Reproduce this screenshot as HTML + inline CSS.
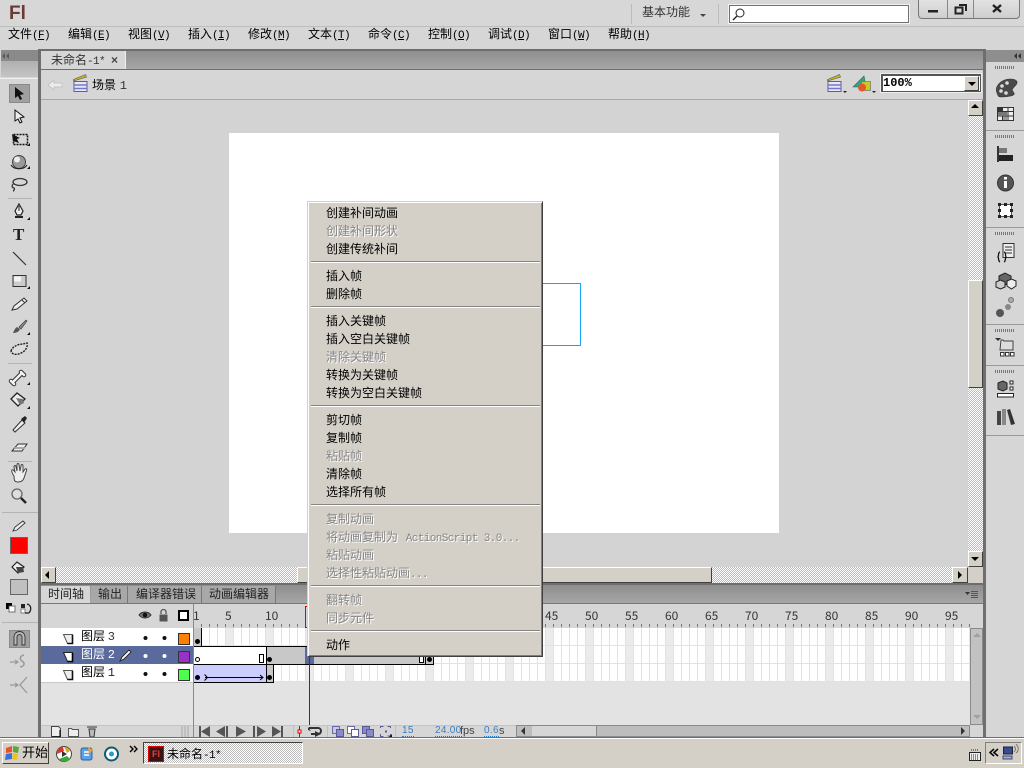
<!DOCTYPE html>
<html><head><meta charset="utf-8"><title>Flash</title>
<style>
html,body{margin:0;padding:0;width:1024px;height:768px;overflow:hidden;background:#d6d6d6}
body{position:relative;font:12px/16px "WenQuanYi Zen Hei","Noto Sans CJK SC",sans-serif;color:#000}
div,span.a{position:absolute}
.t{position:absolute;white-space:nowrap;line-height:16px;height:16px}
.m{font-family:"Liberation Mono",monospace;font-size:11px;letter-spacing:-.6px}
.d{color:#858585;text-shadow:1px 1px 0 #fff}
.s{left:3px;width:229px;height:1px;margin-top:-1px;background:#848484;border-bottom:1px solid #fff}
.ck{background-color:#fff;background-image:linear-gradient(45deg,#bdbdbd 25%,transparent 25%,transparent 75%,#bdbdbd 75%),linear-gradient(45deg,#bdbdbd 25%,transparent 25%,transparent 75%,#bdbdbd 75%);background-size:2px 2px;background-position:0 0,1px 1px}
.b{background:#d4d0c8;border:1px solid;border-color:#fff #404040 #404040 #fff;box-sizing:border-box}
.h{height:1px;background:#b4b4b4;left:5px;width:28px}
.rl{font-size:12px;color:#333}
.v{position:absolute;white-space:nowrap;top:724px;color:#3a7ec0;font:10px/14px 'Liberation Sans',sans-serif;letter-spacing:.3px;border-bottom:1px dotted #2a7ac0;height:12px}
.u{position:absolute;white-space:nowrap;top:724px;color:#444;font:11px/14px 'Liberation Sans',sans-serif}
</style></head><body>

<!-- top bar -->
<div style="left:0;top:0;width:1024px;height:26px;background:#d7d7d7"></div>
<div style="left:0;top:26px;width:1024px;height:1px;background:#bdbdbd"></div>
<div class="t" style="left:9px;top:2px;font:bold 19px/24px 'Liberation Sans',sans-serif;color:#6b3a36;height:24px">Fl</div>
<div style="left:631px;top:4px;width:1px;height:20px;background:#bcbcbc"></div>
<div style="left:718px;top:4px;width:1px;height:20px;background:#bcbcbc"></div>
<div class="t" style="left:642px;top:4px;color:#333">基本功能</div>
<div style="left:700px;top:14px;width:0;height:0;border:3px solid transparent;border-top:3px solid #444"></div>
<div style="left:729px;top:5px;width:180px;height:18px;background:#fff;border:1px solid #707070;box-sizing:border-box;outline:1px solid #f2f2f2"></div>
<svg style="position:absolute;left:731px;top:6px" width="16" height="16"><circle cx="9" cy="7" r="4" fill="none" stroke="#222"/><path d="M6 10L2 14" stroke="#222" stroke-width="1.3"/></svg>
<div style="left:918px;top:-3px;width:102px;height:22px;background:linear-gradient(#e4e4e4,#cecece);border:1px solid #777;border-radius:0 0 4px 4px;box-sizing:border-box"></div>
<div style="left:947px;top:0;width:1px;height:18px;background:#888"></div>
<div style="left:973px;top:0;width:1px;height:18px;background:#888"></div>
<svg style="position:absolute;left:918px;top:0" width="102" height="18"><path d="M10 10h10v2.500h-10z" fill="#222"/><path d="M37.500 7.500h7v6h-7zM41 5h7v6" fill="none" stroke="#222" stroke-width="2"/><path d="M75 5l8 7M83 5l-8 7" fill="none" stroke="#222" stroke-width="2.400"/></svg>

<!-- menu bar -->
<div class="t" style="left:8px;top:26px">文件<span class="m">(<u>F</u>)</span></div>
<div class="t" style="left:68px;top:26px">编辑<span class="m">(<u>E</u>)</span></div>
<div class="t" style="left:128px;top:26px">视图<span class="m">(<u>V</u>)</span></div>
<div class="t" style="left:188px;top:26px">插入<span class="m">(<u>I</u>)</span></div>
<div class="t" style="left:248px;top:26px">修改<span class="m">(<u>M</u>)</span></div>
<div class="t" style="left:308px;top:26px">文本<span class="m">(<u>T</u>)</span></div>
<div class="t" style="left:368px;top:26px">命令<span class="m">(<u>C</u>)</span></div>
<div class="t" style="left:428px;top:26px">控制<span class="m">(<u>O</u>)</span></div>
<div class="t" style="left:488px;top:26px">调试<span class="m">(<u>D</u>)</span></div>
<div class="t" style="left:548px;top:26px">窗口<span class="m">(<u>W</u>)</span></div>
<div class="t" style="left:608px;top:26px">帮助<span class="m">(<u>H</u>)</span></div>

<!-- left tools panel -->
<div style="left:0;top:50px;width:38px;height:688px;background:#d6d6d6"></div>
<div style="left:1px;top:50px;width:37px;height:11px;background:#8a8a8a"></div>
<div style="left:1px;top:61px;width:37px;height:16px;background:linear-gradient(#b0b0b0,#c4c4c4)"></div>
<div style="left:0;top:78px;width:38px;height:1px;background:#f0f0f0"></div>
<div style="left:38px;top:49px;width:3px;height:689px;background:#6e6e6e"></div>
<div style="left:9px;top:84px;width:21px;height:19px;background:#a0a0a0;border:1px solid #8a8a8a;box-sizing:border-box"></div>
<div style="left:9px;top:630px;width:21px;height:18px;background:#a0a0a0;border:1px solid #8a8a8a;box-sizing:border-box"></div>
<div class="h" style="top:198px;left:8px;width:24px"></div>
<div class="h" style="top:363px;left:8px;width:24px"></div>
<div class="h" style="top:461px;left:8px;width:24px"></div>
<div class="h" style="top:512px;left:2px;width:36px"></div>
<div class="h" style="top:622px;left:2px;width:36px"></div>
<div style="left:10px;top:537px;width:18px;height:17px;background:#f00;border:1px solid #666;box-sizing:border-box"></div>
<div style="left:10px;top:579px;width:18px;height:16px;background:#c0c0c0;border:1px solid #666;box-sizing:border-box"></div>

<svg style="position:absolute;left:0;top:50px" width="38" height="660" viewBox="0 50 38 660">
<path d="M5 53v6l-3-3zM9 53v6l-3-3z" fill="#5a5a5a"/>
<path d="M15 87l0 11 3-2 2 4 2-1-2-4 4-1z" fill="#111"/>
<path d="M15 110l0 11 3-2 2 4 2-1-2-4 4-1z" fill="#eee" stroke="#111"/>
<rect x="13.500" y="134.500" width="14" height="10" fill="none" stroke="#111" stroke-dasharray="2 1" stroke-width="1.500"/><path d="M12 134l8 4-3 1 2 4-6-2z" fill="#111"/><path d="M30 143v3h-3z" fill="#111"/>
<circle cx="19" cy="162" r="6.500" fill="#999" stroke="#444"/><circle cx="17" cy="159.500" r="3" fill="#eee"/><path d="M11 165c3 5 13 5 16 0" fill="none" stroke="#222" stroke-width="1.200"/><path d="M30 166v3h-3z" fill="#111"/>
<ellipse cx="20" cy="182" rx="7" ry="3.500" fill="none" stroke="#333" stroke-width="1.300"/><path d="M13 184c-2 3 0 4 1 4s0 3-1 3" fill="none" stroke="#333" stroke-width="1.300"/>
<path d="M19 204l4 7-2 4h-4l-2-4z" fill="#eee" stroke="#222" stroke-width="1.200"/><path d="M19 206v5" stroke="#222"/><rect x="15" y="216" width="8" height="2" fill="#222"/><path d="M30 217v3h-3z" fill="#111"/>
<path d="M13 252l13 13" stroke="#333" stroke-width="1.200"/>
<rect x="13" y="275.500" width="13" height="11" fill="#ccc" stroke="#333"/><rect x="14" y="276.500" width="7" height="5" fill="#f4f4f4"/><path d="M30 286v3h-3z" fill="#111"/>
<path d="M12 310l2-4 10-8 3 3-10 8z" fill="#eee" stroke="#333"/><path d="M22 300l3 3" stroke="#333"/>
<path d="M13 333c3 0 6-1 7-4l-3-2c-2 1-3 4-4 6z" fill="#555"/><path d="M19 327l7-7 1 1-6 8z" fill="#888" stroke="#333" stroke-width=".6"/><path d="M30 332v3h-3z" fill="#111"/>
<path d="M11 351c2-6 10-7 12-7l4-1c1 3-1 8-6 10-4 2-9 2-10-2z" fill="#ddd" stroke="#222" stroke-dasharray="2 1" stroke-width="1.400"/>
<path d="M13 382l9-9M11 381l3 3M21 372l3 3" stroke="#333" stroke-width="4.500" stroke-linecap="round"/><path d="M13 382l9-9M11 381l3 3M21 372l3 3" stroke="#f2f2f2" stroke-width="2.500" stroke-linecap="round"/><path d="M30 382v3h-3z" fill="#111"/>
<path d="M11 399l6-6 8 6-7 7z" fill="#eee" stroke="#222" stroke-width="1.300"/><path d="M16 398l7 1 1 4-4 2z" fill="#777"/><path d="M30 406v3h-3z" fill="#111"/>
<path d="M13 430l9-10 3 3-10 9z" fill="#eee" stroke="#333"/><path d="M21 419l4-3 2 2-3 5z" fill="#222"/>
<path d="M12 451l6-7h9l-5 7z" fill="#eee" stroke="#333"/><path d="M15 447h10l-1 2h-10z" fill="#aaa"/>
<path d="M14 476c-2-3-3-5-2-6s2 1 3 2l-1-5c0-2 2-2 2 0l1 4 0-6c0-2 2-2 2 0l1 6 1-5c0-2 2-2 2 0l0 6 2-3c2-1 2 1 1 3l-2 6c-1 3-3 4-6 4s-4-1-4-6z" fill="#eee" stroke="#444"/>
<circle cx="17" cy="494" r="5" fill="#ddd" stroke="#666" stroke-width="1.300"/><path d="M21 498l5 5" stroke="#222" stroke-width="2.400"/>
<path d="M13 531l2-4 8-6 2 2-8 7z" fill="#eee" stroke="#333" stroke-width=".9"/>
<path d="M12 567l5-5 7 5-6 6z" fill="#eee" stroke="#222" stroke-width="1.200"/><path d="M16 567h7l1 5-6 1z" fill="#444"/>
<rect x="6" y="603" width="6" height="6" fill="#000"/><rect x="9" y="606" width="6" height="6" fill="#fff" stroke="#555" stroke-width=".8"/>
<rect x="21" y="604" width="4" height="4" fill="#222"/><rect x="21" y="609" width="4" height="4" fill="#fff" stroke="#555" stroke-width=".7"/><path d="M27 604c4 1 5 5 2 9M25 613h4" fill="none" stroke="#222" stroke-width="1.300"/>
<path d="M14 645v-8a5.500 5.500 0 0 1 11 0v8h-3v-8a2.500 2.500 0 0 0-5 0v8z" fill="#bbb" stroke="#333" stroke-width=".9"/>
<path d="M10 662h8M15 660l3 2-3 2" stroke="#999" fill="none" stroke-width="1.200"/><path d="M24 655c-4 1-5 4-2 6s3 5-2 6" fill="none" stroke="#999" stroke-width="1.500"/>
<path d="M10 685h8M15 683l3 2-3 2" stroke="#999" fill="none" stroke-width="1.200"/><path d="M27 677l-7 8 7 8" fill="none" stroke="#999" stroke-width="1.300"/>
</svg>
<div class="t" style="left:13px;top:225px;font:bold 17px/20px 'Liberation Serif',serif;height:20px;color:#222">T</div>

<!-- doc tabs -->
<div style="left:38px;top:49px;width:947px;height:2px;background:#6e6e6e"></div>
<div style="left:41px;top:51px;width:942px;height:18px;background:linear-gradient(#8e8e8e,#a6a6a6)"></div>
<div style="left:41px;top:51px;width:84px;height:18px;background:#d6d6d6;border-right:1px solid #f0f0f0"></div>
<div class="t" style="left:51px;top:52px;color:#333">未命名<span class="m">-1*</span></div>
<div class="t" style="left:111px;top:52px;color:#444;font-size:12px;font-family:'Liberation Sans',sans-serif"><b>×</b></div>
<div style="left:41px;top:69px;width:942px;height:1px;background:#6e6e6e"></div>
<div style="left:41px;top:70px;width:942px;height:29px;background:#d6d6d6"></div>
<div style="left:41px;top:99px;width:942px;height:1px;background:#a8a8a8"></div>
<svg style="position:absolute;left:41px;top:70px" width="942" height="29">
<path d="M7 15l6-5v3h8v4h-8v3z" fill="#ececec" stroke="#c4c4c4"/>
<rect x="33" y="11.500" width="13" height="10" fill="#e8e8fb" stroke="#5b5ba8"/><path d="M33 15h13M33 18.500h13" stroke="#7777c4" stroke-width="1.500"/><path d="M32.500 9.500l12-5 1 2.500-13 4z" fill="#c8b820" stroke="#555" stroke-width=".6"/>
<g transform="translate(754 0)"><rect x="33" y="11.500" width="13" height="10" fill="#e8e8fb" stroke="#5b5ba8"/><path d="M33 15h13M33 18.500h13" stroke="#7777c4" stroke-width="1.500"/><path d="M32.500 9.500l12-5 1 2.500-13 4z" fill="#c8b820" stroke="#555" stroke-width=".6"/></g>
<path d="M802 21h4l-2 2z" fill="#222"/>
<path d="M812 17l11-11 2 11z" fill="#2fa58f" stroke="#1b6a60" stroke-width=".6"/><rect x="820.500" y="11.500" width="9" height="9" fill="#c9c91f" stroke="#666" stroke-width=".6"/><circle cx="821" cy="17.500" r="4" fill="#dd5a2a"/>
<path d="M831 21h4l-2 2z" fill="#222"/>
</svg>
<div class="t" style="left:92px;top:77px">场景 <span style="font-family:'Liberation Mono',monospace;font-size:12px;color:#333;margin-left:1px">1</span></div>
<div style="left:881px;top:74px;width:100px;height:18px;background:#fff;border:1px solid #555;border-width:2px 1px 1px 2px;box-sizing:border-box;outline:1px solid #eee"></div>
<div class="t" style="left:883px;top:75px;font:bold 12px/16px 'Liberation Mono',monospace">100%</div>
<div class="b" style="left:964px;top:76px;width:15px;height:15px"></div>
<div style="left:968px;top:82px;width:0;height:0;border:4px solid transparent;border-top:4px solid #000"></div>

<!-- stage -->
<div style="left:41px;top:100px;width:927px;height:467px;background:#d3d3d3"></div>
<div style="left:229px;top:133px;width:550px;height:400px;background:#fff"></div>
<div style="left:500px;top:283px;width:81px;height:63px;border:1px solid #12a7f5;box-sizing:border-box"></div>

<!-- stage v scrollbar -->
<div class="ck" style="left:968px;top:100px;width:15px;height:467px"></div>
<div class="b" style="left:968px;top:280px;width:15px;height:108px"></div>
<div class="b" style="left:968px;top:100px;width:15px;height:16px"></div>
<div style="left:971px;top:104px;width:0;height:0;border:4px solid transparent;border-bottom:4px solid #000;border-top:0"></div>
<div class="b" style="left:968px;top:551px;width:15px;height:16px"></div>
<div style="left:971px;top:557px;width:0;height:0;border:4px solid transparent;border-top:4px solid #000;border-bottom:0"></div>
<!-- stage h scrollbar -->
<div class="ck" style="left:41px;top:567px;width:927px;height:16px"></div>
<div class="b" style="left:297px;top:567px;width:415px;height:16px"></div>
<div class="b" style="left:41px;top:567px;width:15px;height:16px"></div>
<div style="left:45px;top:571px;width:0;height:0;border:4px solid transparent;border-right:4px solid #000;border-left:0"></div>
<div class="b" style="left:952px;top:567px;width:16px;height:16px"></div>
<div style="left:958px;top:571px;width:0;height:0;border:4px solid transparent;border-left:4px solid #000;border-right:0"></div>
<div style="left:968px;top:567px;width:15px;height:16px;background:#d4d0c8"></div>

<!-- timeline -->
<div style="left:41px;top:583px;width:942px;height:2px;background:#6e6e6e"></div>
<div style="left:41px;top:585px;width:942px;height:18px;background:linear-gradient(#8e8e8e,#a6a6a6)"></div>
<div style="left:41px;top:586px;width:49px;height:18px;background:#d6d6d6"></div>
<div style="left:91px;top:586px;width:36px;height:17px;background:#a8a8a8;border-right:1px solid #777"></div>
<div style="left:128px;top:586px;width:73px;height:17px;background:#a8a8a8;border-right:1px solid #777"></div>
<div style="left:202px;top:586px;width:73px;height:17px;background:#a8a8a8;border-right:1px solid #777"></div>
<div class="t" style="left:48px;top:586px;color:#222">时间轴</div>
<div class="t" style="left:98px;top:586px;color:#222">输出</div>
<div class="t" style="left:136px;top:586px;color:#222">编译器错误</div>
<div class="t" style="left:209px;top:586px;color:#222">动画编辑器</div>
<svg style="position:absolute;left:964px;top:589px" width="16" height="12"><path d="M1 3h5l-2.500 3z" fill="#333"/><path d="M7 2.500h7M7 4.500h7M7 6.500h7M7 8.500h7" stroke="#555"/></svg>
<div style="left:41px;top:603px;width:942px;height:1px;background:#777"></div>
<div style="left:41px;top:604px;width:942px;height:24px;background:#d6d6d6"></div>
<svg style="position:absolute;left:130px;top:606px" width="64" height="20">
<path d="M9 9c3-4 9-4 12 0-3 4-9 4-12 0z" fill="#777" stroke="#333"/><circle cx="15" cy="9" r="2.300" fill="#111"/>
<rect x="29.500" y="8.500" width="8" height="7" fill="#555"/><path d="M31 8V6a2.500 2.500 0 0 1 5 0v2" fill="none" stroke="#555" stroke-width="1.300"/>
<rect x="49" y="5" width="9" height="9" fill="#fff" stroke="#000" stroke-width="2"/>
</svg>
<div class="t rl" style="left:193px;top:608px">1</div>
<div class="t rl" style="left:225px;top:608px">5</div>
<div class="t rl" style="left:265px;top:608px">10</div>
<div style="left:194px;top:624px;width:776px;height:3px;background:repeating-linear-gradient(90deg,transparent 0,transparent 7px,#777 7px,#777 8px)"></div>
<div class="t rl" style="left:545px;top:608px">45</div><div class="t rl" style="left:585px;top:608px">50</div><div class="t rl" style="left:625px;top:608px">55</div><div class="t rl" style="left:665px;top:608px">60</div><div class="t rl" style="left:705px;top:608px">65</div><div class="t rl" style="left:745px;top:608px">70</div><div class="t rl" style="left:785px;top:608px">75</div><div class="t rl" style="left:825px;top:608px">80</div><div class="t rl" style="left:865px;top:608px">85</div><div class="t rl" style="left:905px;top:608px">90</div><div class="t rl" style="left:945px;top:608px">95</div>

<!-- layer names -->
<div style="left:41px;top:628px;width:153px;height:18px;background:#fff"></div>
<div style="left:41px;top:646px;width:153px;height:18px;background:#5a6a9c"></div>
<div style="left:41px;top:664px;width:153px;height:18px;background:#fff"></div>
<div style="left:41px;top:682px;width:929px;height:43px;background:#e3e3e3"></div>
<div style="left:41px;top:682px;width:153px;height:1px;background:#c8c8c8"></div>
<div style="left:193px;top:604px;width:1px;height:134px;background:#8a8a8a"></div>
<!-- grid -->
<div style="left:194px;top:628px;width:776px;height:54px;background:repeating-linear-gradient(90deg,#fff 0,#fff 7px,#e2e2e2 7px,#e2e2e2 8px)"></div>
<div style="left:226px;top:628px;width:744px;height:54px;background:repeating-linear-gradient(90deg,#ebebeb 0,#ebebeb 7px,#e2e2e2 7px,#e2e2e2 8px,transparent 8px,transparent 40px)"></div>
<div style="left:194px;top:645px;width:776px;height:1px;background:#e2e2e2"></div>
<div style="left:194px;top:663px;width:776px;height:1px;background:#e2e2e2"></div>
<div style="left:194px;top:681px;width:776px;height:1px;background:#e2e2e2"></div>

<div class="t" style="left:81px;top:628px">图层 <span style="font:12px 'Liberation Mono',monospace;color:#333">3</span></div>
<div class="t" style="left:81px;top:646px;color:#fff">图层 <span style="font:12px 'Liberation Mono',monospace">2</span></div>
<div class="t" style="left:81px;top:664px">图层 <span style="font:12px 'Liberation Mono',monospace;color:#225">1</span></div>

<svg style="position:absolute;left:41px;top:628px" width="153" height="54">
<path d="M22.500 6.500h9v9h-5z" fill="#eee" stroke="#555"/><path d="M31.500 7v8.500h-5" fill="none" stroke="#111" stroke-width="1.600"/>
<g transform="translate(0 18)"><path d="M22.500 6.500h9v9h-5z" fill="#fff" stroke="#222"/><path d="M31.500 7v8.500h-5" fill="none" stroke="#000" stroke-width="1.600"/></g>
<g transform="translate(0 36)"><path d="M22.500 6.500h9v9h-5z" fill="#eee" stroke="#555"/><path d="M31.500 7v8.500h-5" fill="none" stroke="#111" stroke-width="1.600"/></g>
<circle cx="104.500" cy="10" r="2" fill="#111"/><circle cx="123.500" cy="10" r="2" fill="#111"/>
<circle cx="104.500" cy="28" r="2" fill="#fff"/><circle cx="123.500" cy="28" r="2" fill="#fff"/>
<circle cx="104.500" cy="46" r="2" fill="#111"/><circle cx="123.500" cy="46" r="2" fill="#111"/>
<rect x="137.500" y="5.500" width="11" height="11" fill="#ff8000" stroke="#333"/>
<rect x="137.500" y="23.500" width="11" height="11" fill="#9930c8" stroke="#333"/>
<rect x="137.500" y="41.500" width="11" height="11" fill="#4cff4c" stroke="#333"/>
<path d="M79 33l2-4 7-7 2 2-7 7z" fill="#fff" stroke="#222" stroke-width=".9"/>
</svg>

<!-- frames -->
<div style="left:194px;top:628px;width:8px;height:18px;background:#c8c8c8;border-right:1px solid #000;box-sizing:border-box"></div>
<div style="left:194px;top:646px;width:72px;height:19px;background:#fff;border:1px solid #000;border-width:1px 0;box-sizing:border-box"></div>
<div style="left:266px;top:646px;width:168px;height:19px;background:#c8c8c8;border:1px solid #000;box-sizing:border-box"></div>
<div style="left:194px;top:664px;width:72px;height:19px;background:#ccccff;border:1px solid #000;border-width:1px 0;box-sizing:border-box"></div>
<div style="left:266px;top:664px;width:8px;height:19px;background:#c8c8c8;border:1px solid #000;box-sizing:border-box"></div>
<div style="left:305px;top:647px;width:9px;height:17px;background:#5a6a9c"></div>
<svg style="position:absolute;left:194px;top:628px" width="240" height="56">
<circle cx="3.500" cy="13.500" r="2.500" fill="#000"/>
<circle cx="3.500" cy="31.500" r="2" fill="#fff" stroke="#000"/>
<rect x="65.500" y="26.500" width="4" height="8" fill="#fff" stroke="#000"/>
<circle cx="75.500" cy="31.500" r="2.500" fill="#000"/>
<rect x="225.500" y="26.500" width="4" height="8" fill="#fff" stroke="#000"/>
<line x1="231.500" y1="26" x2="231.500" y2="36" stroke="#000"/>
<circle cx="235.500" cy="31.500" r="2.500" fill="#000"/>
<circle cx="3.500" cy="49.500" r="2.500" fill="#000"/>
<path d="M10.500 46.500l3 3-3 3M11 49.500h58M66 47l3 2.500-3 2.500" fill="none" stroke="#000"/>
<circle cx="75.500" cy="49.500" r="2.500" fill="#000"/>
</svg>
<!-- playhead -->
<div style="left:305px;top:606px;width:9px;height:22px;border:1px solid #e00000;box-sizing:border-box"></div>
<div style="left:309px;top:628px;width:1px;height:97px;background:#c00000"></div>

<!-- timeline scroll -->
<div style="left:970px;top:628px;width:13px;height:97px;background:#c2c2c2;border:1px solid #8a8a8a;box-sizing:border-box"></div>
<div style="left:973px;top:633px;width:0;height:0;border:4px solid transparent;border-bottom:4px solid #a0a0a0;border-top:0"></div>
<div style="left:973px;top:715px;width:0;height:0;border:4px solid transparent;border-top:4px solid #a0a0a0;border-bottom:0"></div>
<div style="left:41px;top:725px;width:942px;height:12px;background:#d6d6d6;border-top:1px solid #c4c4c4;box-sizing:border-box"></div>
<div style="left:193px;top:725px;width:1px;height:13px;background:#8a8a8a"></div>
<svg style="position:absolute;left:41px;top:725px" width="480" height="13">
<path d="M10.500 1.500h7l2 2v8h-9z" fill="#eee" stroke="#444"/><path d="M19 5v7h-8" fill="none" stroke="#111" stroke-width="1.200"/>
<path d="M27.500 3.500h3l1 1h6v7h-10z" fill="#eee" stroke="#555"/>
<path d="M46 2h10M48 4h6l-1 8h-4z" fill="#bbb" stroke="#333"/>
<path d="M141 1v11M144 1v11M147 1v11" stroke="#999" stroke-width=".8"/>
<g fill="#555"><path d="M158 1h2v11h-2zM169 1l-9 5.500 9 5.500z"/><path d="M175 6.500l9-5.500v11zM185 1h2v11h-2z"/><path d="M195 1l10 5.500-10 5.500z"/><path d="M212 1h2v11h-2zM216 1l9 5.500-9 5.500z"/><path d="M231 1l9 5.500-9 5.500zM240 1h2v11h-2z"/></g>
<line x1="252.500" y1="0" x2="252.500" y2="13" stroke="#c0c0c0"/>
<path d="M258.500 1v11" stroke="#e00000"/><rect x="257" y="5" width="3" height="3" fill="#fff" stroke="#e00000"/>
<path d="M268 3h9a2 2 0 0 1 0 6h-7" fill="none" stroke="#333" stroke-width="2"/><path d="M274 6l6 3-6 3zM270 6l-3-1v-3" fill="#333"/>
<line x1="286.500" y1="0" x2="286.500" y2="13" stroke="#c0c0c0"/>
<rect x="291.500" y="1.500" width="7" height="7" fill="#c8c8e8" stroke="#6a6aa8"/><rect x="295.500" y="4.500" width="7" height="7" fill="#8a8ac8" stroke="#5a5a98"/>
<rect x="306.500" y="1.500" width="7" height="7" fill="#fff" stroke="#6a6aa8"/><rect x="310.500" y="4.500" width="7" height="7" fill="#fff" stroke="#5a5a98"/>
<rect x="321.500" y="1.500" width="7" height="7" fill="#8a8ac8" stroke="#5a5a98"/><rect x="325.500" y="4.500" width="7" height="7" fill="#8a8ac8" stroke="#5a5a98"/>
<path d="M339.500 3V1.500h3M346.500 1.500h3V3M349.500 9v2h-3M342.500 11.500h-3V9" fill="none" stroke="#5a5a98"/><rect x="344" y="5.500" width="2" height="2" fill="#5a5a98"/><path d="M351 9v3h-3z" fill="#111"/>
<line x1="354.500" y1="0" x2="354.500" y2="13" stroke="#c0c0c0"/>
</svg>
<div class="v" style="left:402px">15</div>
<div class="v" style="left:435px">24.00</div>
<div class="u" style="left:460px">fps</div>
<div class="v" style="left:484px">0.6</div>
<div class="u" style="left:499px">s</div>
<div style="left:516px;top:725px;width:454px;height:12px;background:#bdbdbd;border:1px solid #8a8a8a;box-sizing:border-box"></div>
<div style="left:532px;top:726px;width:64px;height:10px;background:#d6d6d6;border-right:1px solid #888"></div>
<div style="left:521px;top:727px;width:0;height:0;border:4px solid transparent;border-right:4px solid #333;border-left:0"></div>
<div style="left:961px;top:727px;width:0;height:0;border:4px solid transparent;border-left:4px solid #333;border-right:0"></div>
<div style="left:970px;top:725px;width:13px;height:12px;background:#d6d6d6"></div>
<div style="left:0;top:737px;width:1024px;height:1px;background:#6e6e6e"></div>

<!-- right panel -->
<div style="left:983px;top:49px;width:3px;height:689px;background:#6e6e6e"></div>
<div style="left:986px;top:50px;width:38px;height:12px;background:#8e8e8e"></div>
<div style="left:986px;top:62px;width:38px;height:675px;background:#d6d6d6"></div>
<div style="left:986px;top:130px;width:38px;height:1px;background:#9a9a9a"></div>
<div style="left:986px;top:227px;width:38px;height:1px;background:#9a9a9a"></div>
<div style="left:986px;top:324px;width:38px;height:1px;background:#9a9a9a"></div>
<div style="left:986px;top:365px;width:38px;height:1px;background:#9a9a9a"></div>
<div style="left:986px;top:435px;width:38px;height:1px;background:#9a9a9a"></div>
<svg style="position:absolute;left:986px;top:50px" width="38" height="390" viewBox="986 50 38 390">
<path d="M1017 53v6l-3-3zM1021 53v6l-3-3z" fill="#333"/>
<g stroke="#777" stroke-dasharray="1 1" stroke-width="3"><path d="M995 67.500h20M995 136.500h20M995 233.500h20M995 330.500h20M995 371.500h20"/></g>
<path d="M997 93c-3-7 5-14 13-14 7 0 9 3 5 7s-3 4-1 7-8 4-12 4-4-1-5-4z" fill="#4a4a4a" stroke="#333" stroke-width=".6"/><circle cx="1002" cy="86" r="1.800" fill="#ddd"/><circle cx="1007" cy="83" r="1.800" fill="#ddd"/><circle cx="1001" cy="91" r="1.800" fill="#ddd"/><circle cx="1006" cy="93" r="1.800" fill="#ddd"/>
<rect x="997.500" y="107.500" width="16" height="13" fill="#eee" stroke="#333"/><path d="M997 111.500h16M997 116h16M1002.500 107v13M1008 107v13" stroke="#333"/><rect x="998" y="108" width="4" height="3" fill="#333"/><rect x="998" y="112" width="9" height="4" fill="#777"/><rect x="1003" y="116.500" width="5" height="3.500" fill="#999"/>
<rect x="997" y="146" width="2" height="16" fill="#333"/><rect x="999" y="148" width="8" height="5" fill="#777"/><rect x="999" y="155" width="14" height="6" fill="#222"/>
<circle cx="1005.500" cy="183" r="8" fill="#555" stroke="#333"/><rect x="1004" y="181" width="3" height="7" fill="#fff"/><rect x="1004" y="177" width="3" height="2.500" fill="#fff"/>
<rect x="999.500" y="204.500" width="12" height="12" fill="#fff" stroke="#555"/><g fill="#222"><rect x="998" y="203" width="3" height="3"/><rect x="1004" y="203" width="3" height="3"/><rect x="1010" y="203" width="3" height="3"/><rect x="998" y="209" width="3" height="3"/><rect x="1010" y="209" width="3" height="3"/><rect x="998" y="215" width="3" height="3"/><rect x="1004" y="215" width="3" height="3"/><rect x="1010" y="215" width="3" height="3"/></g>
<path d="M1003 243.500h11v14h-11z" fill="#eee" stroke="#333"/><path d="M1005 247h7M1005 250h7M1005 253h7" stroke="#333"/><path d="M1000 252c-2 0-1 3-2 5 1 1 0 4 2 5M1004 252c2 0 1 3 2 5-1 1 0 4-2 5" fill="none" stroke="#111" stroke-width="1.300"/>
<path d="M999 276l6-3 6 3v6l-6 3-6-3z" fill="#666" stroke="#222"/><path d="M1007 281l4.500-2 4.500 2v5l-4.500 3-4.500-3z" fill="#eee" stroke="#222"/><path d="M996 282l4.500-2 4.500 2v5l-4.500 2-4.500-2z" fill="#ccc" stroke="#222"/>
<circle cx="1000" cy="313" r="4" fill="#555"/><circle cx="1008" cy="307" r="3" fill="#888"/><circle cx="1011" cy="300" r="2.500" fill="#aaa" stroke="#777"/>
<path d="M1001 340h2l1 1h9v9h-13z" fill="#ddd" stroke="#444"/><path d="M995 338h6l-3 3z" fill="#333"/><rect x="1000.500" y="352.500" width="3.500" height="3.500" fill="#fff" stroke="#333"/><rect x="1005.500" y="352.500" width="3.500" height="3.500" fill="#fff" stroke="#333"/><rect x="1010.500" y="352.500" width="3.500" height="3.500" fill="#fff" stroke="#333"/>
<path d="M998 383l5-2 4 2v6l-4 2-5-2z" fill="#666" stroke="#222"/><rect x="1010" y="381" width="3" height="3" fill="#fff" stroke="#222"/><rect x="1010" y="387" width="3" height="3" fill="#fff" stroke="#222"/><rect x="997.500" y="393.500" width="16" height="3.500" fill="#fff" stroke="#222"/>
<path d="M997 411h4v14h-4z" fill="#444"/><path d="M1002 409h4v16h-4z" fill="#888"/><path d="M1007 410l3-1 5 15-4 1z" fill="#333"/>
</svg>

<!-- context menu -->
<div style="left:307px;top:201px;width:236px;height:456px;background:#d4d0c8;border:1px solid;border-color:#d4d0c8 #404040 #404040 #d4d0c8;box-sizing:border-box;box-shadow:inset 1px 1px 0 #fff,inset -1px -1px 0 #808080">
<div class="t" style="left:18px;top:3px">创建补间动画</div>
<div class="t d" style="left:18px;top:21px">创建补间形状</div>
<div class="t" style="left:18px;top:39px">创建传统补间</div>
<div class="s" style="top:60px"></div>
<div class="t" style="left:18px;top:66px">插入帧</div>
<div class="t" style="left:18px;top:84px">删除帧</div>
<div class="s" style="top:105px"></div>
<div class="t" style="left:18px;top:111px">插入关键帧</div>
<div class="t" style="left:18px;top:129px">插入空白关键帧</div>
<div class="t d" style="left:18px;top:147px">清除关键帧</div>
<div class="t" style="left:18px;top:165px">转换为关键帧</div>
<div class="t" style="left:18px;top:183px">转换为空白关键帧</div>
<div class="s" style="top:204px"></div>
<div class="t" style="left:18px;top:210px">剪切帧</div>
<div class="t" style="left:18px;top:228px">复制帧</div>
<div class="t d" style="left:18px;top:246px">粘贴帧</div>
<div class="t" style="left:18px;top:264px">清除帧</div>
<div class="t" style="left:18px;top:282px">选择所有帧</div>
<div class="s" style="top:303px"></div>
<div class="t d" style="left:18px;top:309px">复制动画</div>
<div class="t d" style="left:18px;top:327px">将动画复制为 <span class="m" style="margin-left:5px">ActionScript 3.0...</span></div>
<div class="t d" style="left:18px;top:345px">粘贴动画</div>
<div class="t d" style="left:18px;top:363px">选择性粘贴动画<span class="m">...</span></div>
<div class="s" style="top:384px"></div>
<div class="t d" style="left:18px;top:390px">翻转帧</div>
<div class="t d" style="left:18px;top:408px">同步元件</div>
<div class="s" style="top:429px"></div>
<div class="t" style="left:18px;top:435px">动作</div>
</div>

<!-- taskbar -->
<div style="left:0;top:738px;width:1024px;height:30px;background:#d4d0c8;border-top:1px solid #fff;box-sizing:border-box"></div>
<div class="b" style="left:2px;top:742px;width:47px;height:22px;border-color:#fff #404040 #404040 #fff"></div>
<svg style="position:absolute;left:4px;top:744px" width="18" height="18"><path d="M2 4l6-2v6l-6 1z" fill="#e8532a"/><path d="M9 2l6 1-1 6-5-1z" fill="#58a83a"/><path d="M2 10l6-1v6l-7 1z" fill="#3a70d8"/><path d="M9 9l5 1-1 6-5-1z" fill="#f0c020"/></svg>
<div class="t" style="left:22px;top:744px;font-size:13px">开始</div>
<svg style="position:absolute;left:55px;top:744px" width="70" height="20">
<circle cx="9" cy="10" r="7.500" fill="#fff" stroke="#444" stroke-width="1"/><path d="M9 3a7 7 0 0 1 6 4l-3 2z" fill="#e8a020"/><path d="M2 10a7 7 0 0 1 6-7l1 4z" fill="#d8382a"/><path d="M4 15a7 7 0 0 0 11 0l-3-3z" fill="#38a838"/><path d="M7 7l5 3-5 3z" fill="#333"/>
<rect x="26" y="4" width="11" height="12" rx="2" fill="#5aa0e8" stroke="#2a60a8"/><path d="M29 8h5M29 11h5" stroke="#fff" stroke-width="1.500"/><path d="M33 3l5 3-4 4z" fill="#f0a030"/>
<circle cx="56.500" cy="10" r="7.500" fill="#0a5a7a"/><circle cx="56.500" cy="10" r="5.500" fill="#fff"/><circle cx="56.500" cy="10" r="2.500" fill="#2a9ac8"/>
</svg>
<svg style="position:absolute;left:129px;top:745px" width="12" height="9"><path d="M1 1l3 3-3 3M5 1l3 3-3 3" fill="none" stroke="#000" stroke-width="1.400"/></svg>
<div class="ck" style="left:143px;top:742px;width:160px;height:22px;border:1px solid;border-color:#404040 #fff #fff #404040;box-sizing:border-box"></div>
<div style="left:148px;top:746px;width:16px;height:16px;background:#3a1414;border:1px solid #e00000;box-sizing:border-box;color:#e04040;font:bold 9px/14px 'Liberation Sans',sans-serif;text-align:center">Fl</div>
<div class="t" style="left:167px;top:746px">未命名<span class="m">-1*</span></div>
<svg style="position:absolute;left:968px;top:746px" width="18" height="18"><rect x="1.500" y="6.500" width="11" height="8" fill="#eee" stroke="#222"/><path d="M3 9h8M3 11h8M3 13h8" stroke="#222" stroke-dasharray="1 1"/><path d="M3 4h8" stroke="#222" stroke-dasharray="1 1"/></svg>
<div style="left:985px;top:742px;width:37px;height:22px;border:1px solid;border-color:#808080 #fff #fff #808080;box-sizing:border-box"></div>
<svg style="position:absolute;left:988px;top:744px" width="32" height="18"><path d="M6 5L2 8.500 6 12M10 5L6 8.500 10 12" fill="none" stroke="#000" stroke-width="1.500"/><rect x="15.500" y="3" width="9" height="7" fill="#3a4a9a" stroke="#222"/><rect x="15" y="12" width="9" height="3" fill="#9ab0e8" stroke="#446"/><path d="M26 2c2 2 2 4 0 6M28 0c3 3 3 7 0 9" fill="none" stroke="#777"/></svg>
</body></html>
